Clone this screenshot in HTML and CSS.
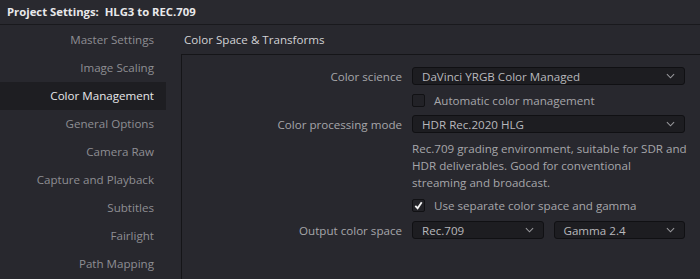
FILE: index.html
```html
<!DOCTYPE html>
<html lang="en">
<head>
    <meta charset="UTF-8">
    <meta name="viewport" content="width=device-width, initial-scale=1.0">
    <title>Project Settings</title>
    <link rel="stylesheet" href="styles.css">
</head>
<body>

    <div class="titlebar">Project Settings:&nbsp; HLG3 to REC.709</div>

    <div class="main">
        <div class="sidebar">
            <div class="nav-item">Master Settings</div>
            <div class="nav-item">Image Scaling</div>
            <div class="nav-item active">Color Management</div>
            <div class="nav-item">General Options</div>
            <div class="nav-item">Camera Raw</div>
            <div class="nav-item">Capture and Playback</div>
            <div class="nav-item">Subtitles</div>
            <div class="nav-item">Fairlight</div>
            <div class="nav-item">Path Mapping</div>
        </div>

        <div class="content">
            <div class="section-title">Color Space &amp; Transforms</div>
            <div class="panel">
                <div class="row row-science">
                    <div class="label">Color science</div>
                    <div class="select"><span>DaVinci YRGB Color Managed</span><svg class="chevron" viewBox="0 0 10 6"><path d="M1 1l4 4 4-4"></path></svg></div>
                </div>
                <div class="row row-check">
                    <div class="label"></div>
                    <label class="check"><span class="box"></span>Automatic color management</label>
                </div>
                <div class="row row-mode">
                    <div class="label">Color processing mode</div>
                    <div class="select"><span>HDR Rec.2020 HLG</span><svg class="chevron" viewBox="0 0 10 6"><path d="M1 1l4 4 4-4"></path></svg></div>
                </div>
                <div class="row row-desc">
                    <div class="label"></div>
                    <p class="desc">Rec.709 grading environment, suitable for SDR and<br>HDR deliverables. Good for conventional<br>streaming and broadcast.</p>
                </div>
                <div class="row row-check2">
                    <div class="label"></div>
                    <label class="check"><span class="box checked"><svg viewBox="0 0 12 12"><path d="M2.5 6.5l2.5 2.5 4.5-6.5"></path></svg></span>Use separate color space and gamma</label>
                </div>
                <div class="row row-output">
                    <div class="label">Output color space</div>
                    <div class="pair">
                        <div class="select"><span>Rec.709</span><svg class="chevron" viewBox="0 0 10 6"><path d="M1 1l4 4 4-4"></path></svg></div>
                        <div class="select"><span>Gamma 2.4</span><svg class="chevron" viewBox="0 0 10 6"><path d="M1 1l4 4 4-4"></path></svg></div>
                    </div>
                </div>
            </div>
        </div>
    </div>

</body>
</html>
```

FILE: styles.css
```css
:root {
    --bg: #28282e;
    --bg-title: #29292f;
    --bg-active: #1e1e22;
    --line: #151518;
    --field: #1d1d21;
    --text-title: #e8e8ea;
    --text-nav: #8e8e93;
    --text-label: #a6a6aa;
    --text-field: #b8b8bc;
}

html, body {
    margin: 0;
    height: 100%;
    overflow: hidden;
}

body {
    background-color: var(--bg);
    font-family: 'Open Sans', 'Noto Sans', sans-serif;
    font-size: 11.6px;
    color: var(--text-label);
}

.titlebar {
    height: 24px;
    line-height: 24px;
    padding-left: 7px;
    background-color: var(--bg-title);
    border-bottom: 1px solid #19191d;
    color: var(--text-title);
    font-weight: 700;
    font-size: 11.3px;
}

.main { display: flex; }

.sidebar {
    width: 166px;
    flex-shrink: 0;
    padding-top: 1px;
}

.nav-item {
    height: 28px;
    line-height: 28px;
    text-align: right;
    padding-right: 12px;
    color: var(--text-nav);
}
.nav-item.active { background-color: var(--bg-active); color: #e6e6e8; }

.content {
    flex: 1;
    padding-left: 15px;
}

.section-title {
    height: 29px;
    line-height: 29px;
    padding-left: 3px;
    color: #d2d2d5;
}

.panel {
    margin-right: -20px;
    height: 220px;
    border: 1px solid var(--line);
    padding-top: 12px;
}

.row {
    display: grid;
    grid-template-columns: 220px 273px;
    column-gap: 10px;
    align-items: center;
}

.label { text-align: right; }

.row-check { margin-top: 6px; }
.row-mode { margin-top: 6px; }
.row-desc { margin-top: 7px; }
.row-check2 { margin-top: 5px; }
.row-output { margin-top: 7px; }

.select {
    display: flex;
    align-items: center;
    justify-content: space-between;
    height: 16px;
    padding: 0 9px 0 9px;
    background-color: var(--field);
    border: 1px solid #101013;
    border-radius: 3px;
    color: var(--text-field);
}

.chevron { width: 9px; height: 6px; }
.chevron path { fill: none; stroke: #98989c; stroke-width: 1.2; }

.check {
    display: flex;
    align-items: center;
    height: 18px;
    gap: 9px;
    color: var(--text-label);
}

.box {
    width: 11px;
    height: 11px;
    border: 1px solid #111114;
    border-radius: 2px;
    background-color: #222227;
    display: flex;
    align-items: center;
    justify-content: center;
}
.box svg { width: 11px; height: 11px; }
.box svg path { fill: none; stroke: #f2f2f2; stroke-width: 2; }

.desc {
    margin: 0 -8px 0 0;
    line-height: 17px;
    white-space: nowrap;
}

.pair {
    display: grid;
    grid-template-columns: 1fr 1fr;
    column-gap: 10px;
}
```
